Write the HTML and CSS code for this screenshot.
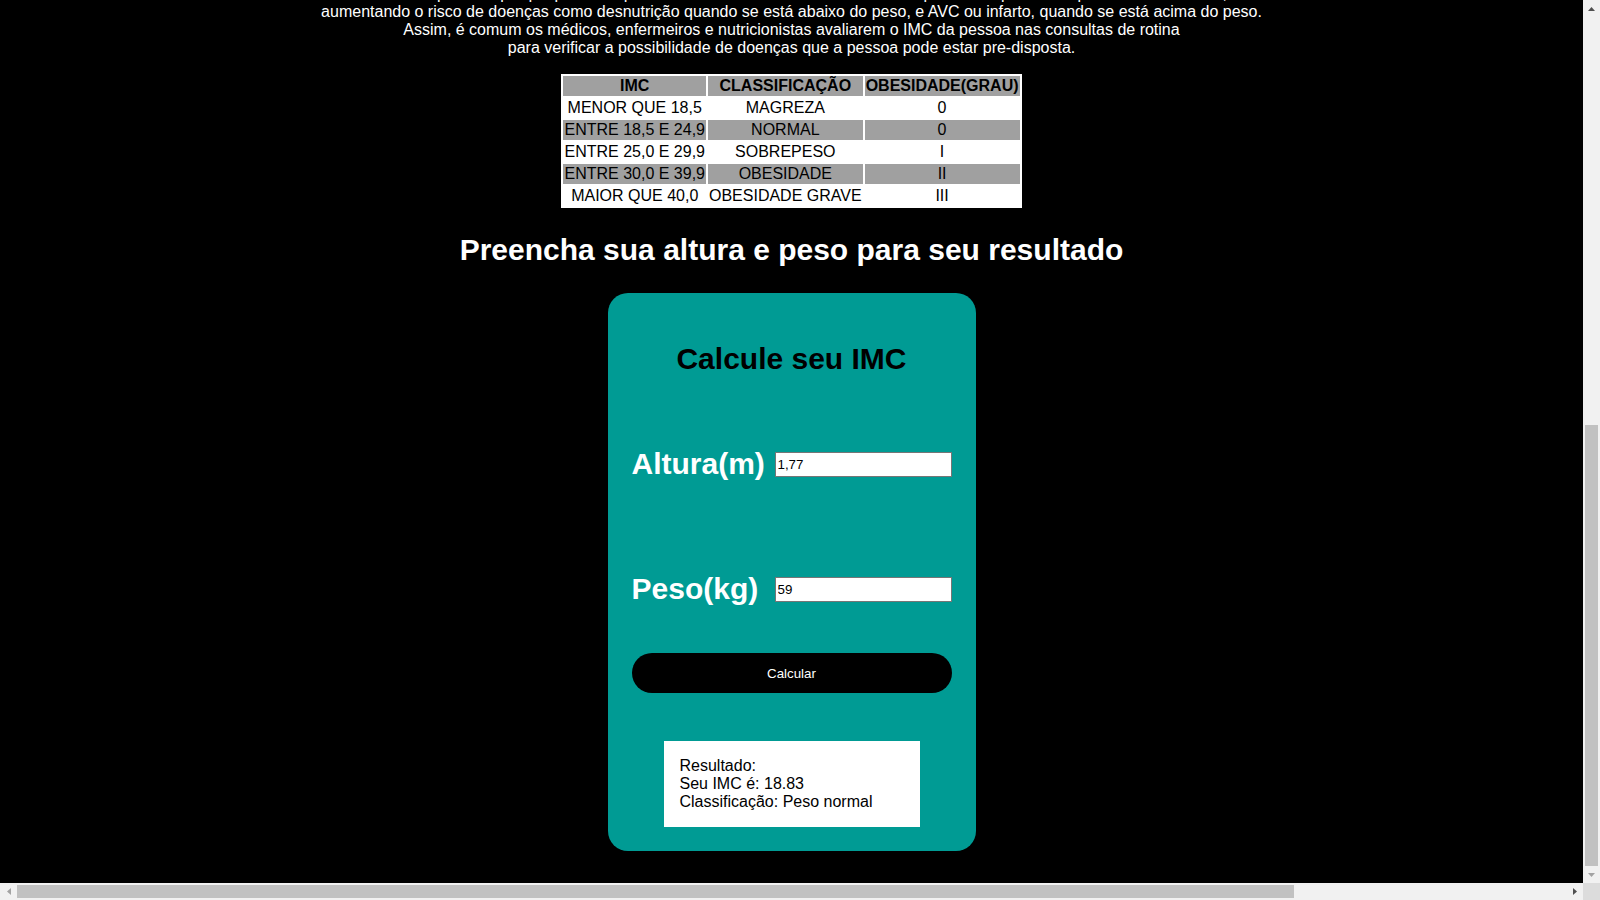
FILE: index.html
```html
<!DOCTYPE html>
<html lang="pt-BR">
<head>
<meta charset="utf-8">
<title>Calculadora de IMC</title>
<link rel="stylesheet" href="styles.css">
</head>
<body>
<div class="frame">
  <div class="viewport">
    <div class="page">
      <section class="intro">
        <h1 class="intro-title">O que é o IMC?</h1>
        <p class="intro-text">
          O Índice de Massa Corporal (IMC) é um cálculo simples que permite avaliar se a pessoa está dentro do peso ideal para sua altura.<br>
          O IMC é importante porque pessoas que estão muito acima ou muito abaixo do peso ideal podem ter problemas de saúde,<br>
          aumentando o risco de doenças como desnutrição quando se está abaixo do peso, e AVC ou infarto, quando se está acima do peso.<br>
          Assim, é comum os médicos, enfermeiros e nutricionistas avaliarem o IMC da pessoa nas consultas de rotina<br>
          para verificar a possibilidade de doenças que a pessoa pode estar pre-disposta.
        </p>
        <table class="imc-table">
          <tr>
            <th>IMC</th>
            <th>CLASSIFICAÇÃO</th>
            <th>OBESIDADE(GRAU)</th>
          </tr>
          <tr>
            <td>MENOR QUE 18,5</td>
            <td>MAGREZA</td>
            <td>0</td>
          </tr>
          <tr class="alt">
            <td>ENTRE 18,5 E 24,9</td>
            <td>NORMAL</td>
            <td>0</td>
          </tr>
          <tr>
            <td>ENTRE 25,0 E 29,9</td>
            <td>SOBREPESO</td>
            <td>I</td>
          </tr>
          <tr class="alt">
            <td>ENTRE 30,0 E 39,9</td>
            <td>OBESIDADE</td>
            <td>II</td>
          </tr>
          <tr>
            <td>MAIOR QUE 40,0</td>
            <td>OBESIDADE GRAVE</td>
            <td>III</td>
          </tr>
        </table>
      </section>
      <h2 class="section-title">Preencha sua altura e peso para seu resultado</h2>
      <main class="card">
        <h2 class="card-title">Calcule seu IMC</h2>
        <div class="field field-first">
          <label for="altura">Altura(m)</label>
          <input id="altura" type="text" value="1,77">
        </div>
        <div class="field">
          <label for="peso">Peso(kg)</label>
          <input id="peso" type="text" value="59">
        </div>
        <button class="btn" type="button">Calcular</button>
        <div class="result">
          Resultado:<br>
          Seu IMC é: 18.83<br>
          Classificação: Peso normal
        </div>
      </main>
    </div>
  </div>
  <div class="vbar">
    <div class="sb-btn">
      <svg width="7" height="4" viewBox="0 0 7 4"><polygon points="3.5,0 7,4 0,4" fill="#505050"/></svg>
    </div>
    <div class="vtrack"><div class="vthumb"></div></div>
    <div class="sb-btn">
      <svg width="7" height="4" viewBox="0 0 7 4"><polygon points="0,0 7,0 3.5,4" fill="#a3a3a3"/></svg>
    </div>
  </div>
  <div class="hbar">
    <div class="sb-btn">
      <svg width="4" height="7" viewBox="0 0 4 7"><polygon points="4,0 4,7 0,3.5" fill="#a3a3a3"/></svg>
    </div>
    <div class="htrack"><div class="hthumb"></div></div>
    <div class="sb-btn">
      <svg width="4" height="7" viewBox="0 0 4 7"><polygon points="0,0 4,3.5 0,7" fill="#505050"/></svg>
    </div>
  </div>
  <div class="corner"></div>
</div>
</body>
</html>
```
FILE: styles.css
```css
html, body {
  margin: 0;
  padding: 0;
  overflow: hidden;
}

body {
  background: #000;
  color: #fff;
  font-family: "Liberation Sans", Arial, sans-serif;
  font-size: 16px;
}

.frame {
  display: grid;
  grid-template-columns: 1583px 17px;
  grid-template-rows: 883px 17px;
  width: 1600px;
  height: 900px;
}

.viewport {
  overflow: hidden;
  display: flex;
  flex-direction: column;
  justify-content: flex-end;
  background: #000;
}

.page {
  flex: none;
  padding: 0 8px 8px;
}

.intro-title {
  text-align: center;
  font-size: 32px;
  margin: 21px 0;
}

.intro-text {
  text-align: center;
  margin: 0 0 17px;
}

.imc-table {
  margin: 0 auto;
  background: #fff;
  color: #000;
  border-spacing: 2px;
  font-size: 16px;
}

.imc-table th,
.imc-table td {
  padding: 1px;
  text-align: center;
}

.imc-table th {
  background: #a0a0a0;
}

.imc-table tr.alt td {
  background: #a0a0a0;
}

.section-title {
  text-align: center;
  font-size: 30px;
  margin: 25px 0 26px;
}

.card {
  display: block;
  width: 368px;
  box-sizing: border-box;
  margin: 0 auto 24px;
  background: #009b94;
  border-radius: 20px;
  padding: 24px 24px 24px;
}

.card-title {
  color: #000;
  font-size: 30px;
  text-align: center;
  margin: 25px 0 71px;
}

.field {
  display: flex;
  justify-content: space-between;
  align-items: center;
}

.field-first {
  margin-bottom: 91px;
}

.field label {
  font-size: 30px;
  font-weight: bold;
  color: #fff;
}

.field input {
  width: 177px;
  height: 25px;
  box-sizing: border-box;
  border: 1px solid #767676;
  padding: 1px 2px;
  font-family: "Liberation Sans", Arial, sans-serif;
  font-size: 13.33px;
  color: #000;
  background: #fff;
}

.btn {
  display: block;
  width: 100%;
  height: 40px;
  margin: 47px 0 48px;
  border: 0;
  border-radius: 20px;
  background: #000;
  color: #fff;
  font-family: "Liberation Sans", Arial, sans-serif;
  font-size: 13.33px;
  font-weight: normal;
}

.result {
  width: 256px;
  box-sizing: border-box;
  margin: 0 auto;
  padding: 16px;
  background: #fff;
  color: #000;
  font-size: 16px;
}

/* scrollbars */
.vbar,
.hbar {
  background: #f1f1f1;
  display: flex;
}

.vbar {
  flex-direction: column;
}

.sb-btn {
  flex: none;
  width: 17px;
  height: 17px;
  display: flex;
  align-items: center;
  justify-content: center;
}

.sb-btn svg {
  display: block;
}

.vtrack {
  flex: 1;
  display: flex;
  flex-direction: column;
  justify-content: flex-end;
  align-items: center;
}

.vthumb {
  width: 13px;
  height: 441px;
  background: #c1c1c1;
}

.htrack {
  flex: 1;
  display: flex;
  align-items: center;
}

.hthumb {
  width: 1277px;
  height: 13px;
  background: #c1c1c1;
}

.corner {
  background: #dcdcdc;
}
```
